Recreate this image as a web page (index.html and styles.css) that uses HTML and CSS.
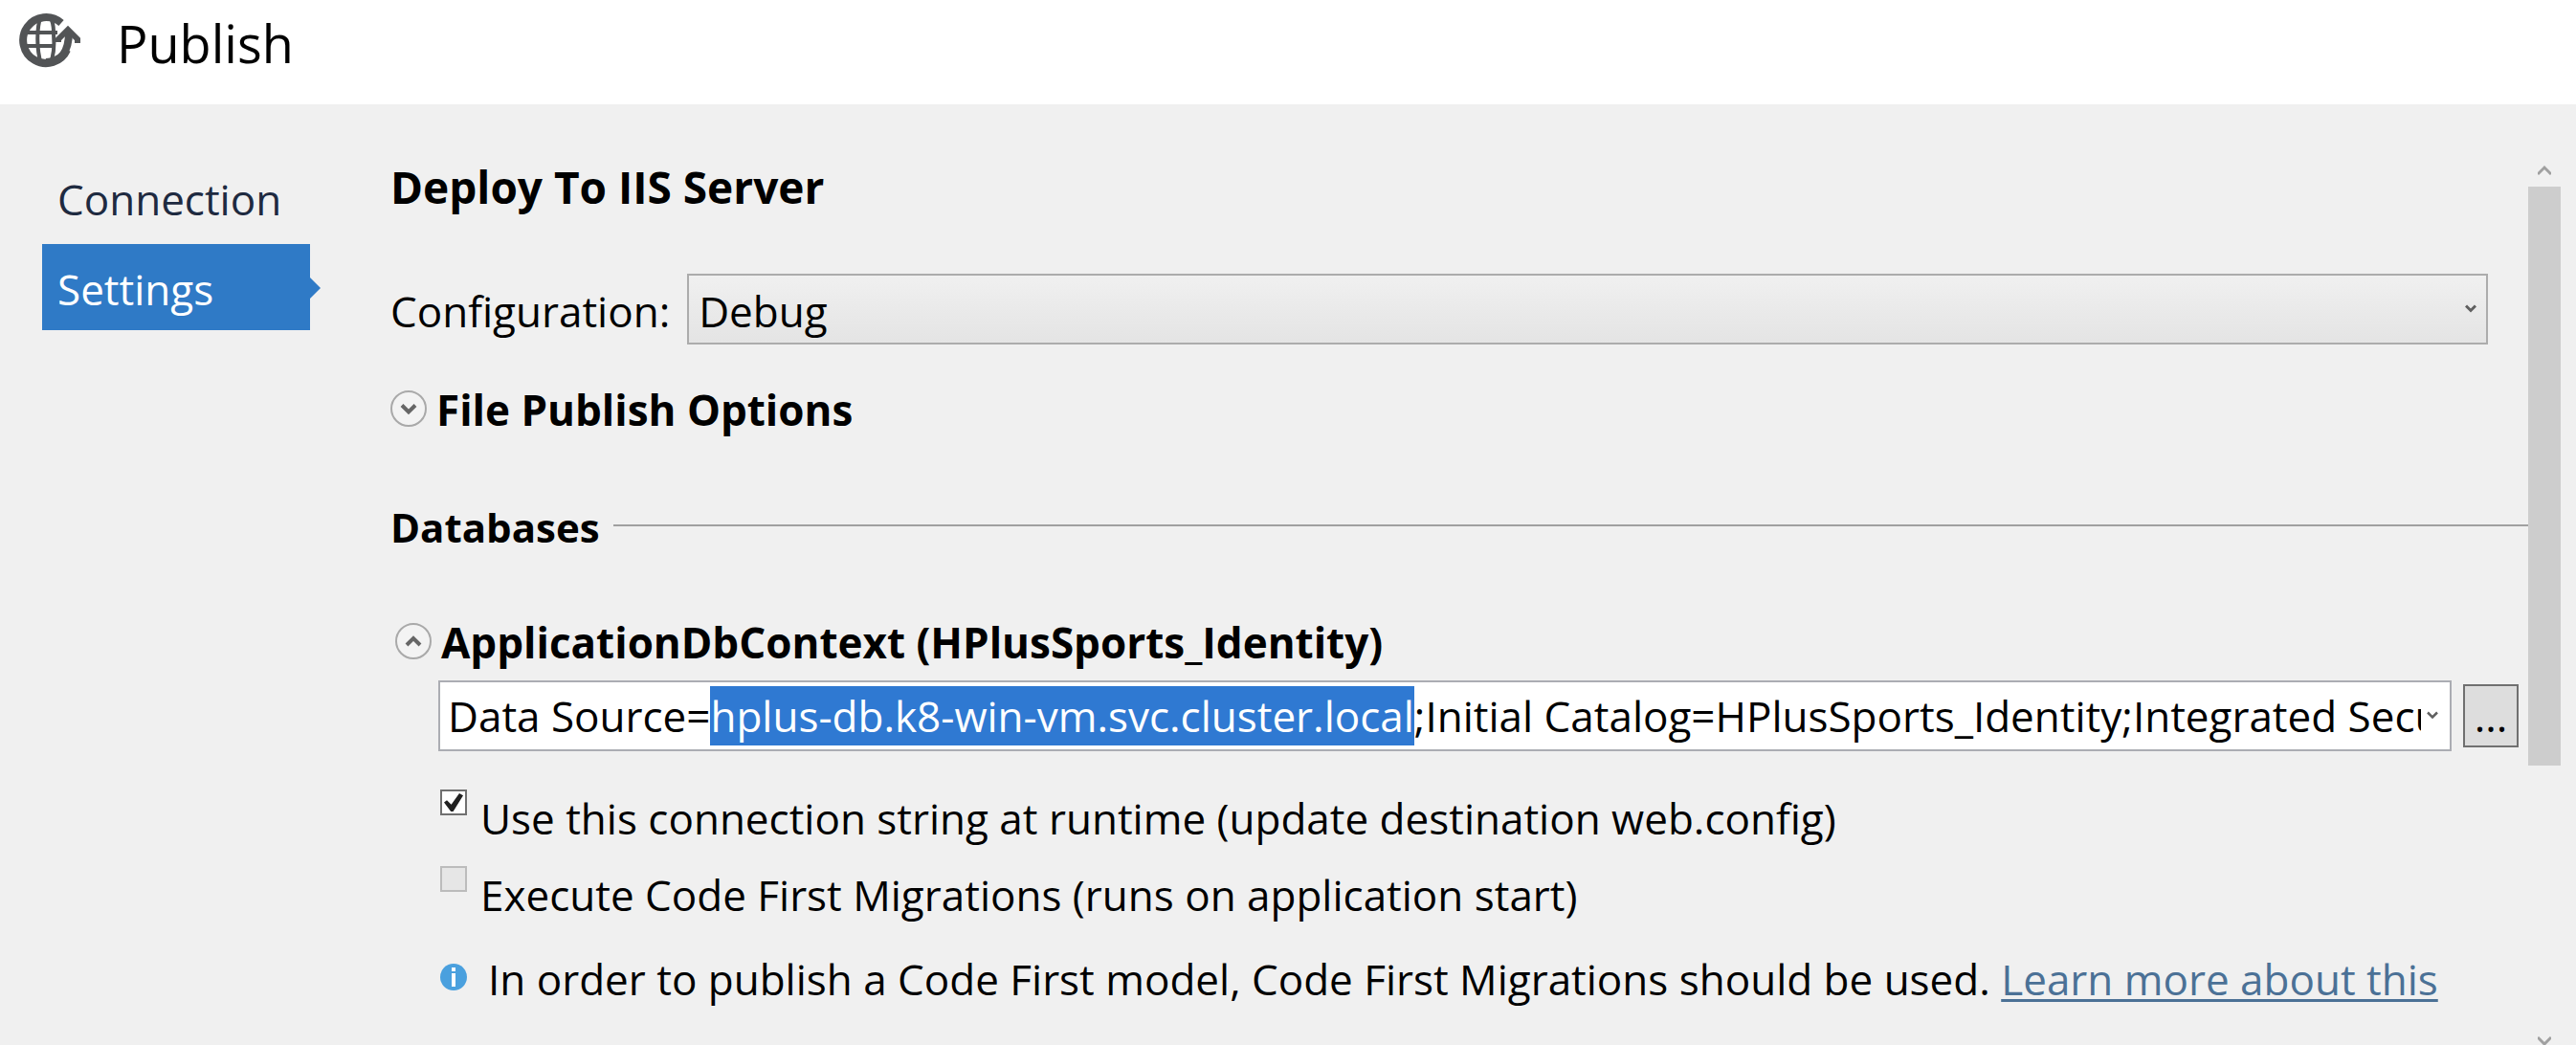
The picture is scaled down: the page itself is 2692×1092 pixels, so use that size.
FILE: index.html
```html
<!DOCTYPE html>
<html lang="en">
<head>
<meta charset="utf-8">
<title>Publish</title>
<link rel="stylesheet" href="styles.css">
</head>
<body>
<header class="titlebar">
  <svg class="titlebar-icon" viewBox="0 0 66 60" aria-hidden="true">
    <g fill="none" stroke="#525456">
      <path d="M46 13A24 24 0 1 0 52 41" stroke-width="8"/>
      <path d="M6 23H42M6 37H40" stroke-width="4"/>
      <path d="M25 5C20 18 20 40 25 56M34 5C37 11 38 16 38 22M34 56C39 47 39 36 38 24" stroke-width="4"/>
      <path d="M30 54C46 53 54 44 54 22" stroke-width="8"/>
      <path d="M43 33V30L53 20L63 30V34" stroke-width="6"/>
    </g>
  </svg>
  <h1 class="titlebar-text">Publish</h1>
</header>
<div class="body">
  <nav class="nav">
    <a class="nav-item" href="#connection">Connection</a>
    <a class="nav-item nav-item-active" href="#settings" aria-current="page">Settings</a>
  </nav>
  <main class="content">
    <h2 class="title">Deploy To IIS Server</h2>
    <div class="config">
      <label class="config-label" for="configuration">Configuration:</label>
      <div class="dropdown">
        <select id="configuration" class="select"><option>Debug</option><option>Release</option></select>
        <svg class="chevron" viewBox="0 0 12 10" aria-hidden="true"><path d="M1 1.500L6 6.500L11 1.500" fill="none" stroke="#606060" stroke-width="3"/></svg>
      </div>
    </div>
    <section class="expander">
      <button class="toggle" type="button" aria-expanded="false" aria-labelledby="file-options">
        <svg viewBox="0 0 38 38" aria-hidden="true"><circle cx="19" cy="19" r="18" fill="#f3f3f3" stroke="#a9a9a9" stroke-width="2"/><path d="M12 15.500L19 22.500L26 15.500" fill="none" stroke="#666" stroke-width="4"/></svg>
      </button>
      <h3 class="heading" id="file-options">File Publish Options</h3>
    </section>
    <div class="group">
      <h3 class="group-title">Databases</h3>
      <hr class="rule">
    </div>
    <section class="database">
      <div class="expander expander-database">
        <button class="toggle" type="button" aria-expanded="true" aria-labelledby="db-context">
          <svg viewBox="0 0 38 38" aria-hidden="true"><circle cx="19" cy="19" r="18" fill="#f3f3f3" stroke="#a9a9a9" stroke-width="2"/><path d="M12 23L19 16L26 23" fill="none" stroke="#666" stroke-width="4"/></svg>
        </button>
        <h3 class="heading" id="db-context">ApplicationDbContext (HPlusSports_Identity)</h3>
      </div>
      <div class="connection">
        <div class="combo">
          <input class="combo-input" id="connection-string" type="text" aria-labelledby="db-context" spellcheck="false" value="Data Source=hplus-db.k8-win-vm.svc.cluster.local;Initial Catalog=HPlusSports_Identity;Integrated Security=True">
          <svg class="chevron" viewBox="0 0 12 10" aria-hidden="true"><path d="M1 1.500L6 6.500L11 1.500" fill="none" stroke="#606060" stroke-width="2.500"/></svg>
        </div>
        <button class="browse" type="button">...</button>
      </div>
      <div class="options">
        <label class="option"><input class="check" type="checkbox" checked><span>Use this connection string at runtime (update destination web.config)</span></label>
        <label class="option"><input class="check" type="checkbox" disabled><span>Execute Code First Migrations (runs on application start)</span></label>
      </div>
      <p class="note">
        <svg class="info" viewBox="0 0 28 28" aria-hidden="true"><circle cx="14" cy="14" r="14" fill="#4aa0de"/><path d="M12 4H16V8H12ZM12 10H16V24H12Z" fill="#fff"/></svg>
        <span>In order to publish a Code First model, Code First Migrations should be used. <a class="link" href="#learn">Learn more about this</a></span>
      </p>
    </section>
  </main>
  <div class="scrollbar" aria-hidden="true">
    <svg class="scroll-arrow" viewBox="0 0 14 12"><path d="M0 10L7 3L14 10" fill="none" stroke="#a0a0a0" stroke-width="3"/></svg>
    <div class="scroll-track"><div class="scroll-thumb"></div></div>
    <svg class="scroll-arrow" viewBox="0 0 14 12"><path d="M0 4L7 11L14 4" fill="none" stroke="#a0a0a0" stroke-width="3"/></svg>
  </div>
</div>
<script src="script.js"></script>
</body>
</html>
```
FILE: styles.css
```css
* {
  box-sizing: border-box;
}

body {
  margin: 0;
  display: flex;
  flex-direction: column;
  height: 100vh;
  overflow: hidden;
  background: #f0f0f0;
  color: #000;
  font-family: "Segoe UI", "Open Sans", sans-serif;
  font-size: 44px;
  line-height: 60px;
}

h1, h2, h3, p {
  margin: 0;
}

input, select, button {
  font: inherit;
  color: inherit;
}

.titlebar {
  display: flex;
  flex: none;
  align-items: flex-start;
  gap: 38px;
  height: 109px;
  padding: 11px 18px;
  background: #fff;
}

.titlebar-icon {
  width: 66px;
  height: 60px;
}

.titlebar-text {
  font-size: 54px;
  font-weight: 400;
  line-height: 68px;
}

.body {
  display: flex;
  flex: 1;
  min-height: 0;
  padding-right: 16px;
}

.nav {
  display: flex;
  flex: none;
  flex-direction: column;
  gap: 4px;
  width: 364px;
  padding: 52px 40px 0 44px;
}

.nav-item {
  position: relative;
  height: 90px;
  padding: 17px 16px 0;
  color: #1e2a40;
  text-decoration: none;
}

.nav-item-active {
  background: #2f7ac6;
  color: #fff;
}

.nav-item-active::after {
  content: "";
  position: absolute;
  left: 100%;
  top: 35px;
  border: 11px solid transparent;
  border-right: 0;
  border-left-color: #2f7ac6;
}

.content {
  flex: 1;
  min-width: 0;
  padding: 56px 0 0 44px;
  white-space: nowrap;
}

.title {
  font-size: 46px;
  font-weight: 700;
}

.heading {
  font-size: 44px;
  font-weight: 700;
}

.config {
  display: flex;
  align-items: center;
  gap: 18px;
  margin: 61px 42px 38px 0;
}

.config-label {
  padding-top: 4px;
}

.dropdown, .combo {
  display: grid;
  flex: 1;
  align-items: center;
  min-width: 0;
}

.select, .combo-input, .chevron {
  grid-area: 1 / 1;
}

.select {
  width: 100%;
  height: 74px;
  padding: 4px 10px 0;
  appearance: none;
  border: 2px solid #acacac;
  border-radius: 0;
  background: linear-gradient(#f0f0f0, #e4e4e4);
}

.chevron {
  justify-self: end;
  width: 12px;
  height: 10px;
  margin-right: 12px;
  pointer-events: none;
}

.expander {
  display: flex;
  align-items: flex-start;
  gap: 10px;
  margin-bottom: 63px;
}

.expander-database {
  margin: 0 0 10px 5px;
}

.toggle {
  flex: none;
  width: 38px;
  height: 38px;
  margin-top: 10px;
  padding: 0;
  border: 0;
  background: none;
}

.toggle svg {
  display: block;
}

.group {
  display: flex;
  gap: 14px;
  margin-bottom: 60px;
}

.group-title {
  font-size: 42px;
  font-weight: 700;
}

.rule {
  flex: 1;
  height: 2px;
  margin: 27px 0 0;
  border: 0;
  background: #a0a0a0;
}

.connection {
  display: flex;
  align-items: center;
  gap: 12px;
  margin: 0 10px 0 50px;
}

.combo {
  height: 74px;
  border: 2px solid #abadb3;
  background: #fff;
}

.combo-input {
  min-width: 0;
  height: 62px;
  margin: 0 30px 0 8px;
  padding: 0;
  border: 0;
  outline: 0;
  background: none;
  line-height: 62px;
  caret-color: transparent;
}

.combo-input::selection {
  background: #2f79d2;
  color: #fff;
}

.browse {
  width: 58px;
  height: 66px;
  padding: 0;
  border: 2px solid #707070;
  background: #ddd;
}

.options {
  display: flex;
  flex-direction: column;
  gap: 20px;
  margin: 40px 0 28px 52px;
}

.option {
  display: flex;
  gap: 14px;
}

.check {
  flex: none;
  width: 28px;
  height: 27px;
  margin: 0;
  appearance: none;
  border: 2px solid #707070;
  background: #fff;
}

.check:checked::before {
  content: "";
  display: block;
  width: 20px;
  height: 19px;
  margin: 2px;
  background: #212121;
  clip-path: polygon(0 50%, 15% 38%, 38% 62%, 80% 0, 100% 12%, 48% 100%, 36% 100%);
}

.check:disabled {
  border-color: #bcbcbc;
  background: #e6e6e6;
}

.note {
  display: flex;
  gap: 22px;
  margin-left: 52px;
}

.info {
  flex: none;
  width: 28px;
  height: 28px;
  margin-top: 14px;
}

.link {
  color: #4b7196;
  text-decoration-thickness: 3px;
  text-underline-offset: 4px;
}

.scrollbar {
  display: flex;
  flex: none;
  flex-direction: column;
  align-items: center;
  width: 34px;
  padding-top: 63px;
}

.scroll-arrow {
  flex: none;
  width: 14px;
  height: 12px;
}

.scroll-track {
  flex: 1;
  width: 100%;
  padding: 11px 0 8px;
}

.scroll-thumb {
  height: 69%;
  background: #cdcdcd;
}
```
FILE: script.js
```js
const field = document.getElementById("connection-string");
const host = "hplus-db.k8-win-vm.svc.cluster.local";
const start = field.value.indexOf(host);
field.focus();
field.setSelectionRange(start, start + host.length);
field.scrollLeft = 0;
```
